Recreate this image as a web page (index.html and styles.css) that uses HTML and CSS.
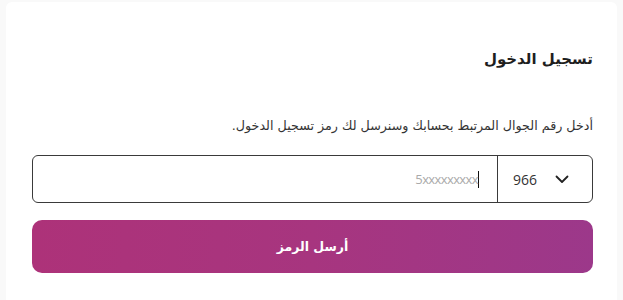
FILE: index.html
```
<!DOCTYPE html>
<html lang="ar" dir="rtl">
<head>
<meta charset="utf-8">
<link rel="stylesheet" href="styles.css">
</head>
<body>
<div class="card">
  <h1 class="title">تسجيل الدخول</h1>
  <p class="desc">أدخل رقم الجوال المرتبط بحسابك وسنرسل لك رمز تسجيل الدخول.</p>
  <div class="phone">
    <div class="code">
      <span class="code-num">966</span>
      <svg class="chev" width="14" height="9" viewBox="0 0 14 9"><path d="M1.5 1.5 L7 7 L12.5 1.5" fill="none" stroke="#222" stroke-width="1.8" stroke-linecap="round" stroke-linejoin="round"/></svg>
    </div>
    <div class="number">
      <span class="caret"></span><span class="ph">5xxxxxxxxx</span>
    </div>
  </div>
  <button class="send">أرسل الرمز</button>
</div>
</body>
</html>
```
FILE: styles.css
```
html, body {
  margin: 0;
  padding: 0;
  background: #f9f9f9;
}
body {
  font-family: "DejaVu Sans", "Noto Sans", sans-serif;
  color: #222;
}
.card {
  margin: 2px 6px 0;
  height: 298px;
  background: #fff;
  border-radius: 6px 6px 0 0;
  padding: 0 24px 0 26px;
  box-sizing: border-box;
  overflow: hidden;
}
.title {
  margin: 0;
  padding-top: 45px;
  font-size: 15px;
  font-weight: bold;
  line-height: 24px;
  color: #1e1e1e;
}
.desc {
  margin: 0;
  padding-top: 46px;
  font-size: 12.7px;
  line-height: 18px;
  color: #333;
}
.phone {
  margin-top: 20px;
  height: 48px;
  border: 1px solid #3a3a3a;
  border-radius: 6px;
  display: flex;
  box-sizing: border-box;
}
.code {
  width: 95px;
  border-left: 1px solid #3a3a3a;
  direction: ltr;
  display: flex;
  align-items: center;
  padding-left: 15px;
  box-sizing: border-box;
}
.code-num {
  font-family: "Open Sans", sans-serif;
  font-size: 14px;
  color: #333;
}
.chev {
  margin-left: 18px;
}
.number {
  flex: 1;
  display: flex;
  align-items: center;
  padding-right: 16px;
  direction: rtl;
}
.ph {
  font-family: "Open Sans", sans-serif;
  font-size: 13px;
  color: #aaa;
  letter-spacing: -0.6px;
}
.caret {
  width: 1px;
  height: 17px;
  background: #111;
  margin-right: 2px;
}
.send {
  display: block;
  width: 100%;
  margin-top: 17px;
  height: 53px;
  border: none;
  border-radius: 10px;
  background: linear-gradient(90deg, #ad3279 0%, #a7357f 50%, #9c388a 100%);
  color: #fff;
  font-family: "DejaVu Sans", sans-serif;
  font-weight: bold;
  font-size: 12.5px;
}
```
